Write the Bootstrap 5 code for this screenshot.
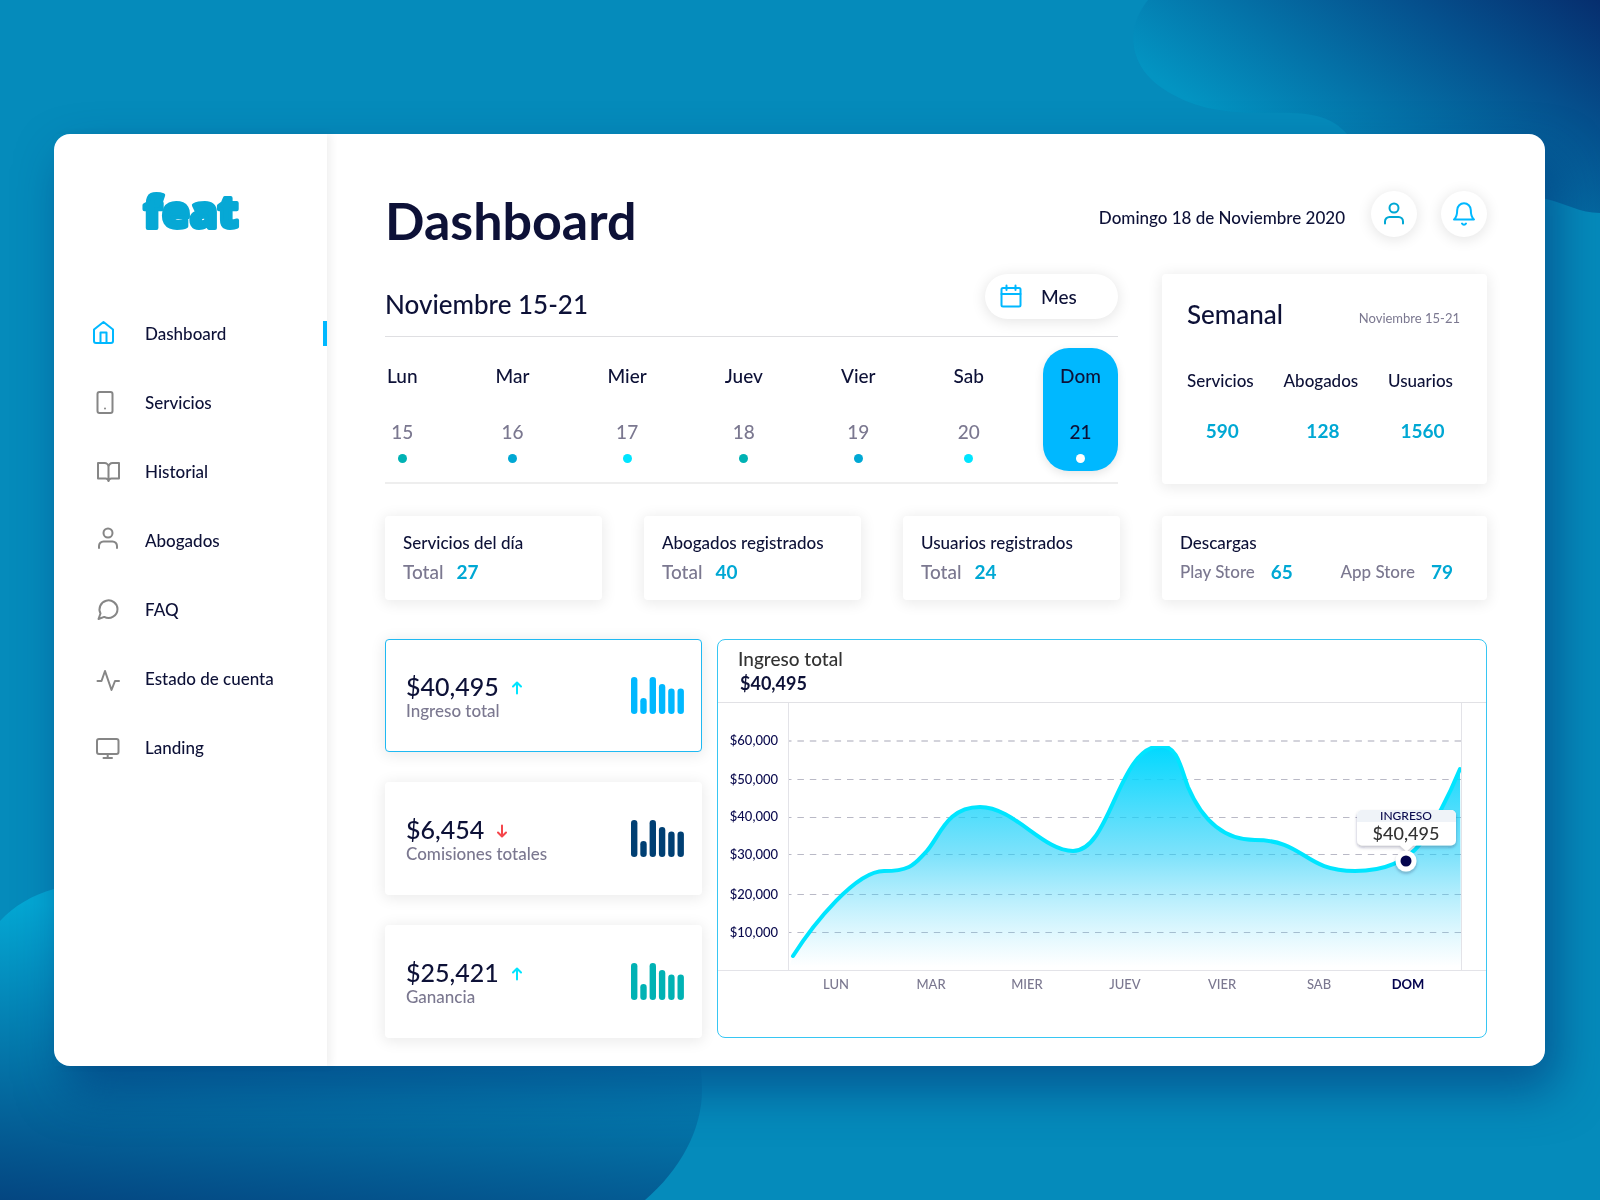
<!DOCTYPE html>
<html lang="es">
<head>
<meta charset="utf-8">
<meta name="viewport" content="width=device-width, initial-scale=1">
<title>feat – Dashboard</title>
<link href="https://cdn.jsdelivr.net/npm/bootstrap@5.3.0/dist/css/bootstrap.min.css" rel="stylesheet">
<style>
  :root { --ink:#0d1137; --muted:#7b7890; --teal:#00a8d4; --sky:#00b8ff; }
  body { font-family: Lato, "Open Sans", sans-serif; font-weight: 500; font-size: 17px; line-height: 24px; color: var(--ink); background: #058bbb; }
  .backdrop { position: fixed; inset: 0; width: 100%; height: 100%; z-index: -1; }
  .page-wrap { padding: 24px 55px 24px 54px; }
  .shell { background: #fff; border-radius: 16px; box-shadow: 12px 24px 48px rgba(3,40,110,.5); }
  .side { width: 273px; padding-top: 40px; box-shadow: 4px 0 8px rgba(0,0,0,.06); }
  .side-link { height: 69px; padding-left: 38px; gap: 25px; color: var(--ink); text-decoration: none; }
  .side-link svg { width: 28px; height: 28px; stroke: #868686; }
  .side-link.current { border: 0; background: linear-gradient(var(--sky), var(--sky)) right center / 4px 25px no-repeat; }
  .side-link.current svg { stroke: var(--sky); }
  .line-icon { fill: none; stroke-width: 2; stroke-linecap: round; stroke-linejoin: round; }
  .brand { margin-bottom: 45px; }
  .content-area { padding: 57px 58px 28px 58px; min-width: 0; }
  .page-title { font-size: 52px; line-height: 58px; font-weight: 700; }
  .today { line-height: 54px; margin-right: 26px; }
  .round-btn { width: 46px; height: 46px; background: #fff; border: 0; box-shadow: 0 2px 14px 1px rgba(0,0,0,.1); }
  .soft { background: #fff; border-radius: 4px; box-shadow: 0 2px 14px 2px rgba(0,0,0,.08); }
  .h-mid { font-size: 26px; line-height: 30px; font-weight: 500; }
  .top-row { margin-top: 25px; gap: 44px; }
  .week-head { height: 63px; border-bottom: 1px solid #dfdfe2; }
  .week-head .h-mid { padding-top: 15px; }
  .month-btn { width: 133px; height: 45px; padding-left: 15px; gap: 19px; background: #fff; border: 0; border-radius: 23px; box-shadow: 0 2px 14px 1px rgba(0,0,0,.1); font-size: 19px; font-weight: 500; color: var(--ink); }
  .week { padding: 11px 0 11px 2px; border-bottom: 2px solid #eee; }
  .week-days { margin-right: 59px; }
  .day { border: 0; background: none; padding: 14px 0 8px; font-size: 19px; line-height: 28px; font-weight: 500; color: var(--ink); }
  .day-num { color: var(--muted); margin-top: 28px; }
  .dot { width: 9px; height: 9px; border-radius: 50%; margin-top: 8px; }
  .day.picked { width: 75px; border-radius: 26px; background: var(--sky); box-shadow: 0 3px 10px rgba(0,0,0,.1); }
  .day.picked .day-num { color: var(--ink); }
  .weekly { flex: 0 0 325px; padding: 24px 27px 0 25px; }
  .tiny { font-size: 13px; color: var(--muted); font-weight: 400; }
  .weekly-cols { margin: 39px 7px 0 0; }
  .num { font-size: 19px; line-height: 28px; font-weight: 700; color: var(--teal); }
  .weekly .num { margin-top: 24px; padding-left: 4px; }
  .stats { display: grid; grid-template-columns: 217fr 217fr 217fr 325fr; gap: 42px; margin-top: 32px; }
  .stat { padding: 15px 18px 14px; }
  .stat-line { margin-top: 3px; gap: 13px; color: var(--muted); font-size: 19px; line-height: 28px; }
  .store { font-size: 17px; gap: 16px; }
  .bottom-row { margin-top: 39px; gap: 15px; }
  .money-col { flex: 0 0 317px; gap: 30px; }
  .money { height: 113px; padding: 0 17px 0 20px; border: 1px solid transparent; }
  .money.chosen { border-color: #1fb9f2; }
  .amount { font-size: 25px; line-height: 30px; gap: 13px; }
  .sub-label { line-height: 20px; color: var(--muted); }
  .chart-card { border: 1px solid #37c6f3; border-radius: 8px; min-width: 0; }
  .chart-head { height: 63px; padding: 7px 20px 0; border-bottom: 1px solid #e1e1e5; font-size: 19px; color: #333; }
  .chart-head strong { font-size: 18px; color: var(--ink); padding-left: 2px; }
  .ylab { font-size: 13px; fill: #0b0b4e; text-anchor: end; }
  .xlab { font-size: 13px; fill: var(--muted); text-anchor: middle; }
</style>
<script src="https://cdn.jsdelivr.net/npm/bootstrap@5.3.0/dist/js/bootstrap.bundle.min.js"></script>
</head>
<body>
<svg class="backdrop" viewBox="0 0 1600 1200" preserveAspectRatio="xMidYMid slice" aria-hidden="true">
  <defs>
    <linearGradient id="blobTop" gradientUnits="userSpaceOnUse" x1="1600" y1="0" x2="1420" y2="260"><stop offset="0" stop-color="#062e6e"/><stop offset=".35" stop-color="#05518e"/><stop offset="1" stop-color="#0394c2"/></linearGradient>
    <linearGradient id="blobLow" gradientUnits="userSpaceOnUse" x1="0" y1="1200" x2="29" y2="903"><stop offset="0" stop-color="#044681"/><stop offset="1" stop-color="#04a8d4"/></linearGradient>
  </defs>
  <path fill="url(#blobTop)" d="M1148 0C1124 30 1130 66 1162 88C1190 107 1220 113 1262 113C1300 112 1328 112 1347 134C1370 190 1470 180 1546 199C1565 203 1580 213 1600 213V0Z"/>
  <path fill="url(#blobLow)" d="M0 921C14 906 32 895 54 889C100 872 150 880 230 900C420 960 702 900 702 1090C702 1130 680 1170 645 1200H0Z"/>
</svg>

<div class="page-wrap min-vh-100 d-flex align-items-center">
  <div class="shell d-flex w-100">
    <aside class="side flex-shrink-0">
      <a href="#" class="brand d-block text-center" aria-label="feat">
        <svg width="140" height="80" viewBox="0 0 140 80"><text x="70" y="54" text-anchor="middle" font-family="'Open Sans', sans-serif" font-weight="800" font-size="45" fill="#06a8d5" stroke="#06a8d5" stroke-width="4" stroke-linejoin="round">feat</text></svg>
      </a>
      <nav class="d-flex flex-column">
        <a href="#" class="side-link current d-flex align-items-center"><svg class="line-icon" viewBox="0 0 28 28"><path d="M2 9.500 11.500 2 21 9.500V21a2 2 0 0 1-2 2H4a2 2 0 0 1-2-2ZM8.500 23V12.500h6V23"/></svg>Dashboard</a>
        <a href="#" class="side-link d-flex align-items-center"><svg class="line-icon" viewBox="0 0 28 28"><rect x="5.500" y="3" width="15" height="21" rx="2"/><path d="M13 19.500h.01"/></svg>Servicios</a>
        <a href="#" class="side-link d-flex align-items-center"><svg class="line-icon" viewBox="0 0 28 28"><path d="M6 5h6.500a4 4 0 0 1 4 4v14a3 3 0 0 0-3-2.500H6ZM27 5H20.500a4 4 0 0 0-4 4v14a3 3 0 0 1 3-2.500H27Z"/></svg>Historial</a>
        <a href="#" class="side-link d-flex align-items-center"><svg class="line-icon" viewBox="0 0 28 28"><circle cx="16" cy="6" r="4.500"/><path d="M7 21v-2a4.500 4.500 0 0 1 4.500-4.500h9A4.500 4.500 0 0 1 25 19v2"/></svg>Abogados</a>
        <a href="#" class="side-link d-flex align-items-center"><svg class="line-icon" viewBox="0 0 28 28"><path d="M25.500 13a9 9 0 0 1-13.300 7.900L6.500 23l2-5.500A9 9 0 1 1 25.500 13Z"/></svg>FAQ</a>
        <a href="#" class="side-link d-flex align-items-center"><svg class="line-icon" viewBox="0 0 28 28"><path d="M5.500 16h4L13 6l6.500 19 3.500-9h4"/></svg>Estado de cuenta</a>
        <a href="#" class="side-link d-flex align-items-center"><svg class="line-icon" viewBox="0 0 28 28"><rect x="5" y="5" width="21.500" height="15" rx="2"/><path d="M15.700 20v4M11.500 24h8.500"/></svg>Landing</a>
      </nav>
    </aside>

    <main class="content-area flex-grow-1">
      <header class="d-flex align-items-start">
        <h1 class="page-title mb-0 me-auto">Dashboard</h1>
        <span class="today">Domingo 18 de Noviembre 2020</span>
        <button type="button" class="round-btn rounded-circle d-flex align-items-center justify-content-center me-4 p-0" aria-label="Perfil"><svg class="line-icon" width="24" height="24" viewBox="0 0 24 24" stroke="#00a8d4"><circle cx="12" cy="6" r="4.500"/><path d="M3 21.500v-2A4.500 4.500 0 0 1 7.500 15h9a4.500 4.500 0 0 1 4.500 4.500v2"/></svg></button>
        <button type="button" class="round-btn rounded-circle d-flex align-items-center justify-content-center p-0" aria-label="Notificaciones"><svg class="line-icon" width="24" height="24" viewBox="0 0 24 24" stroke="#00b8ff"><path d="M2 17.500c2-1.500 3.200-3 3.200-9.500a6.800 6.800 0 0 1 13.600 0c0 6.500 1.200 8 3.200 9.500ZM10 21.500a2.300 2.300 0 0 0 4 0"/></svg></button>
      </header>

      <div class="top-row d-flex">
        <section class="flex-grow-1">
          <div class="week-head d-flex justify-content-between align-items-start">
            <h2 class="h-mid mb-0">Noviembre 15-21</h2>
            <button type="button" class="month-btn d-flex align-items-center"><svg class="line-icon" width="22" height="26" viewBox="0 0 22 26" stroke="#00b8ff"><rect x="1.500" y="4" width="19" height="18.500" rx="1.500"/><path d="M1.500 10h19M6.500 1.500V6M15.500 1.500V6"/></svg>Mes</button>
          </div>
          <div class="week d-flex">
            <div class="week-days d-flex justify-content-between flex-grow-1">
              <button type="button" class="day d-flex flex-column align-items-center"><span>Lun</span><span class="day-num">15</span><span class="dot" style="background:#00b2b4"></span></button>
              <button type="button" class="day d-flex flex-column align-items-center"><span>Mar</span><span class="day-num">16</span><span class="dot" style="background:#00a8d4"></span></button>
              <button type="button" class="day d-flex flex-column align-items-center"><span>Mier</span><span class="day-num">17</span><span class="dot" style="background:#00e5ff"></span></button>
              <button type="button" class="day d-flex flex-column align-items-center"><span>Juev</span><span class="day-num">18</span><span class="dot" style="background:#00b2b4"></span></button>
              <button type="button" class="day d-flex flex-column align-items-center"><span>Vier</span><span class="day-num">19</span><span class="dot" style="background:#00a8d4"></span></button>
              <button type="button" class="day d-flex flex-column align-items-center"><span>Sab</span><span class="day-num">20</span><span class="dot" style="background:#00e5ff"></span></button>
            </div>
            <button type="button" class="day picked d-flex flex-column align-items-center"><span>Dom</span><span class="day-num">21</span><span class="dot bg-white"></span></button>
          </div>
        </section>
        <section class="weekly soft">
          <div class="d-flex justify-content-between align-items-center">
            <h2 class="h-mid mb-0">Semanal</h2><span class="tiny pt-2">Noviembre 15-21</span>
          </div>
          <div class="weekly-cols d-flex justify-content-between text-center">
            <div><div>Servicios</div><div class="num">590</div></div>
            <div><div>Abogados</div><div class="num">128</div></div>
            <div><div>Usuarios</div><div class="num">1560</div></div>
          </div>
        </section>
      </div>

      <div class="stats">
        <section class="stat soft"><div>Servicios del día</div><div class="stat-line d-flex"><span>Total</span><span class="num">27</span></div></section>
        <section class="stat soft"><div>Abogados registrados</div><div class="stat-line d-flex"><span>Total</span><span class="num">40</span></div></section>
        <section class="stat soft"><div>Usuarios registrados</div><div class="stat-line d-flex"><span>Total</span><span class="num">24</span></div></section>
        <section class="stat soft"><div>Descargas</div>
          <div class="stat-line d-flex justify-content-between pe-3">
            <span class="store d-flex"><span>Play Store</span><span class="num">65</span></span>
            <span class="store d-flex"><span>App Store</span><span class="num">79</span></span>
          </div></section>
      </div>

      <div class="bottom-row d-flex">
        <div class="money-col d-flex flex-column">
          <section class="money chosen soft d-flex align-items-center justify-content-between">
            <div><div class="amount d-flex align-items-center">$40,495<svg class="line-icon mt-1" width="10" height="14" viewBox="0 0 10 14" stroke="#00e5ff"><path d="M5 12.500V2M1 5.500 5 1.500l4 4"/></svg></div><div class="sub-label">Ingreso total</div></div>
            <svg width="53" height="37" viewBox="0 0 53 37" fill="#00b8ff"><rect width="6.400" height="37" rx="3.200"/><rect x="9.300" y="21" width="6.400" height="16" rx="3.200"/><rect x="18.600" width="6.400" height="37" rx="3.200"/><rect x="27.900" y="7" width="6.400" height="30" rx="3.200"/><rect x="37.200" y="11.500" width="6.400" height="25.500" rx="3.200"/><rect x="46.500" y="11.500" width="6.400" height="25.500" rx="3.200"/></svg>
          </section>
          <section class="money soft d-flex align-items-center justify-content-between">
            <div><div class="amount d-flex align-items-center">$6,454<svg class="line-icon mt-1" width="10" height="14" viewBox="0 0 10 14" stroke="#f5454b"><path d="M5 1.500V12M1 8.500l4 4 4-4"/></svg></div><div class="sub-label">Comisiones totales</div></div>
            <svg width="53" height="37" viewBox="0 0 53 37" fill="#003f73"><rect width="6.400" height="37" rx="3.200"/><rect x="9.300" y="21" width="6.400" height="16" rx="3.200"/><rect x="18.600" width="6.400" height="37" rx="3.200"/><rect x="27.900" y="7" width="6.400" height="30" rx="3.200"/><rect x="37.200" y="11.500" width="6.400" height="25.500" rx="3.200"/><rect x="46.500" y="11.500" width="6.400" height="25.500" rx="3.200"/></svg>
          </section>
          <section class="money soft d-flex align-items-center justify-content-between">
            <div><div class="amount d-flex align-items-center">$25,421<svg class="line-icon mt-1" width="10" height="14" viewBox="0 0 10 14" stroke="#00e5ff"><path d="M5 12.500V2M1 5.500 5 1.500l4 4"/></svg></div><div class="sub-label">Ganancia</div></div>
            <svg width="53" height="37" viewBox="0 0 53 37" fill="#00b2b4"><rect width="6.400" height="37" rx="3.200"/><rect x="9.300" y="21" width="6.400" height="16" rx="3.200"/><rect x="18.600" width="6.400" height="37" rx="3.200"/><rect x="27.900" y="7" width="6.400" height="30" rx="3.200"/><rect x="37.200" y="11.500" width="6.400" height="25.500" rx="3.200"/><rect x="46.500" y="11.500" width="6.400" height="25.500" rx="3.200"/></svg>
          </section>
        </div>

        <section class="chart-card flex-grow-1">
          <div class="chart-head"><div>Ingreso total</div><strong class="d-block">$40,495</strong></div>
          <svg class="d-block w-100" viewBox="0 0 768 334" role="img" aria-label="Ingreso por día">
            <defs>
              <linearGradient id="areaFade" x1="0" y1="43" x2="0" y2="264" gradientUnits="userSpaceOnUse"><stop offset="0" stop-color="#00d9ff"/><stop offset=".5" stop-color="#1fcdf8" stop-opacity=".57"/><stop offset="1" stop-color="#5cd6fb" stop-opacity="0"/></linearGradient>
              <clipPath id="plotClip"><rect x="70" y="43" width="674" height="225"/></clipPath>
              <filter id="tipShadow" x="-20%" y="-20%" width="140%" height="160%"><feDropShadow dx="0" dy="2" stdDeviation="1.500" flood-color="#20204a" flood-opacity=".3"/></filter>
            </defs>
            <g stroke="#b9b9c6" stroke-dasharray="6.500 5.900">
              <path stroke="#d3d3db" stroke-width="2" d="M70 38H743" stroke-dashoffset="3"/>
              <path d="M70 76.500H743M70 114.500H743M70 151.500H743M70 191.500H743M70 229.500H743" stroke-dashoffset="3"/>
            </g>
            <g clip-path="url(#plotClip)">
              <path fill="url(#areaFade)" d="M75 253C96 220 138 168 166 168S197 160 208 149C222 134 228 104 262 104C296 104 325 148 355 148C393 148 400 43 443 43C460 43 463 66 470 84C482 112 502 137 537 137C587 137 585 168 637 168C672 168 692 154 703 140C718 118 730 95 742 66L743 267H70Z"/>
              <path fill="none" stroke="#00e5ff" stroke-width="4" stroke-linecap="round" d="M75 253C96 220 138 168 166 168S197 160 208 149C222 134 228 104 262 104C296 104 325 148 355 148C393 148 400 43 443 43C460 43 463 66 470 84C482 112 502 137 537 137C587 137 585 168 637 168C672 168 692 154 703 140C718 118 730 95 742 66"/>
            </g>
            <path stroke="#e3e3e8" fill="none" d="M70.500 0V267M743.500 0V267M0 267.500H768"/>
            <g class="ylab"><text x="60" y="42">$60,000</text><text x="60" y="81">$50,000</text><text x="60" y="118">$40,000</text><text x="60" y="156">$30,000</text><text x="60" y="196">$20,000</text><text x="60" y="234">$10,000</text></g>
            <g class="xlab"><text x="118" y="286">LUN</text><text x="213" y="286">MAR</text><text x="309" y="286">MIER</text><text x="407" y="286">JUEV</text><text x="504" y="286">VIER</text><text x="601" y="286">SAB</text><text x="690" y="286" fill="#04044e" font-weight="700">DOM</text></g>
            <g filter="url(#tipShadow)"><path fill="#fff" d="M644 107h89a5 5 0 0 1 5 5v25.500a5 5 0 0 1-5 5h-38l-6.500 6-6.500-6h-38a5 5 0 0 1-5-5V112a5 5 0 0 1 5-5Z"/></g>
            <path fill="#eff3f8" d="M644 107h89a5 5 0 0 1 5 5v7H639v-7a5 5 0 0 1 5-5Z"/>
            <text x="688" y="117" text-anchor="middle" font-size="12" fill="#0b0b4e">INGRESO</text>
            <text x="688" y="137" text-anchor="middle" font-size="18" fill="#333">$40,495</text>
            <circle cx="688" cy="158" r="10.500" fill="#fff" filter="url(#tipShadow)"/><circle cx="688" cy="158" r="5.500" fill="#04044e"/>
          </svg>
        </section>
      </div>
    </main>
  </div>
</div>
</body>
</html>
